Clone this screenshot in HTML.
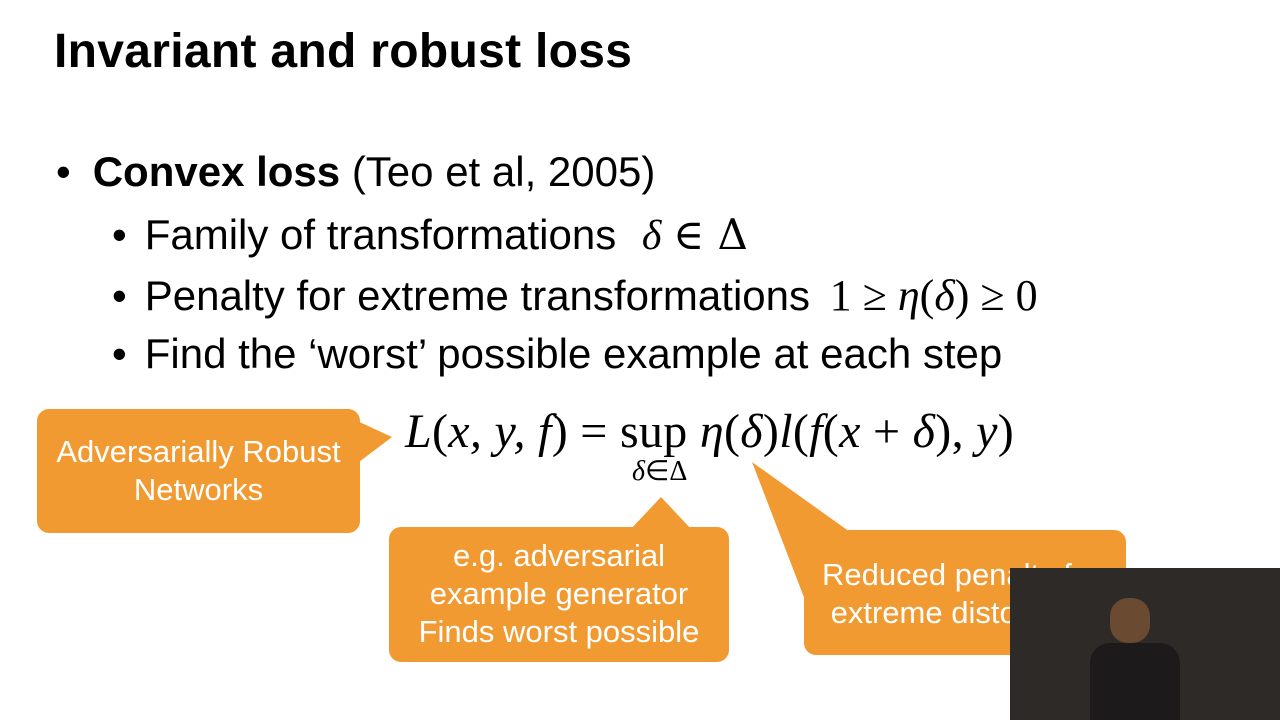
<!DOCTYPE html>
<html><head><style>
body{margin:0;width:1280px;height:720px;background:#fff;position:relative;overflow:hidden;font-family:"Liberation Sans",sans-serif;}
.t{position:absolute;white-space:nowrap;color:#000}
.m{font-family:"Liberation Serif",serif;font-style:italic}
.box{position:absolute;background:#f29a32;border-radius:12px;color:#fff;font-size:31px;text-align:center;line-height:38px}
</style></head><body>
<div class="t" style="left:54px;top:24px;font-size:48px;font-weight:bold;letter-spacing:0.3px">Invariant and robust loss</div>
<div class="t" style="left:56px;top:148px;font-size:42px">•<span style="margin-left:22px"></span><b>Convex loss</b> (Teo et al, 2005)</div>
<div class="t" style="left:112px;top:210px;font-size:42px">•<span style="margin-left:18px"></span>Family of transformations <span class="m" style="margin-left:14px">δ</span> <span style="font-family:'DejaVu Serif'">∈ Δ</span></div>
<div class="t" style="left:112px;top:270px;font-size:42px">•<span style="margin-left:18px"></span>Penalty for extreme transformations <span style="font-family:'Liberation Serif';margin-left:8px;font-size:44px">1 ≥ <i>η</i>(<i>δ</i>) ≥ 0</span></div>
<div class="t" style="left:112px;top:330px;font-size:42px">•<span style="margin-left:18px"></span>Find the ‘worst’ possible example at each step</div>
<div class="t" style="left:405px;top:404px;font-size:48px;font-family:'Liberation Serif',serif;letter-spacing:0.3px"><i>L</i>(<i>x, y, f</i>) = sup <i>η</i>(<i>δ</i>)<i>l</i>(<i>f</i>(<i>x</i> + <i>δ</i>), <i>y</i>)</div>
<div class="t" style="left:632px;top:454px;font-size:28px;font-family:'Liberation Serif',serif"><i>δ</i>∈Δ</div>
<svg style="position:absolute;left:0;top:0" width="1280" height="720">
<polygon points="355,420 392,437 355,465" fill="#f29a32"/>
<polygon points="630,530 661,497 692,530" fill="#f29a32"/>
<polygon points="752,462 850,532 805,600" fill="#f29a32"/>
</svg>
<div class="box" style="left:37px;top:409px;width:323px;height:124px;padding-top:24px;box-sizing:border-box">Adversarially Robust<br>Networks</div>
<div class="box" style="left:389px;top:527px;width:340px;height:135px;padding-top:10px;box-sizing:border-box">e.g. adversarial<br>example generator<br>Finds worst possible</div>
<div class="box" style="left:804px;top:530px;width:322px;height:125px;padding-top:26px;box-sizing:border-box;text-align:left;padding-left:18px">Reduced penalty for<br>&nbsp;extreme distortions</div>
<div style="position:absolute;left:1010px;top:568px;width:270px;height:152px;background:#2e2a28">
<div style="position:absolute;left:100px;top:30px;width:40px;height:45px;background:#6a4a30;border-radius:18px"></div>
<div style="position:absolute;left:80px;top:75px;width:90px;height:77px;background:#1c1a1a;border-radius:20px 20px 0 0"></div>
</div>
</body></html>
